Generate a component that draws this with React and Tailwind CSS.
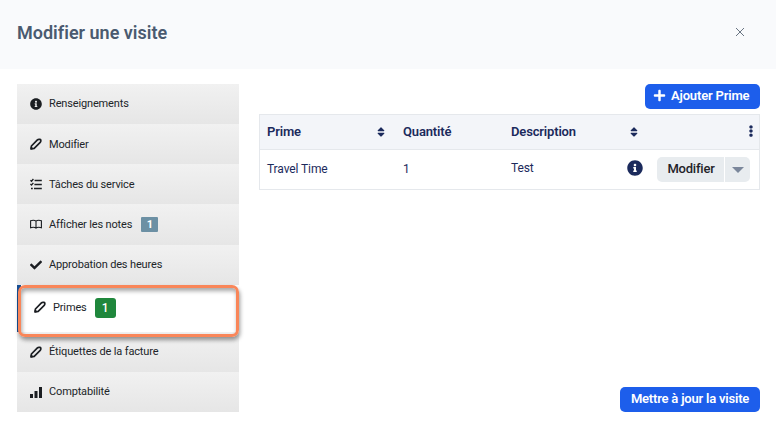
import React from 'react';
import { FaInfoCircle, FaCheck, FaSort, FaPlus, FaEllipsisV } from 'react-icons/fa';

function Pencil() {
  return (
    <svg viewBox="0 0 12 12" className="size-3" fill="none" stroke="#1b1e22">
      <path d="M1 11 1.4 8 7.4 1.9Q8 1.3 9 1.3H10Q10.8 1.4 10.8 2.2V3Q10.8 3.8 10.2 4.4L4.2 10.3Z" strokeWidth="1.7" strokeLinejoin="round" />
      <path d="M1 11 1.2 9 3 10.6Z" fill="#1b1e22" />
    </svg>
  );
}

function Tasks() {
  return (
    <svg viewBox="0 0 12 12" className="size-3" fill="none" stroke="#1b1e22" strokeWidth="1.3">
      <path d="M4.6 2.5H11.8M4.4 6.5H11.8M4 10.5H11.8M0.4 2.2 1.5 3.2 3.4 1M0.4 6 1.5 7 3.4 4.8" />
      <path d="M1 10.5H2.8" strokeWidth="1.5" />
    </svg>
  );
}

function Book() {
  return (
    <svg viewBox="0 0 12 12" className="size-3" fill="none" stroke="#1b1e22" strokeWidth="1.1">
      <path d="M6 3.2Q5 2.3 3.2 2.3 1.5 2.3 .6 2.7V9.7Q1.5 9.3 3.2 9.3 5 9.3 6 10.2 7 9.3 8.8 9.3 10.5 9.3 11.4 9.7V2.7Q10.5 2.3 8.8 2.3 7 2.3 6 3.2V9.9" />
    </svg>
  );
}

function Bars() {
  return (
    <svg viewBox="0 0 12 12" className="size-3" fill="#1b1e22">
      <path d="M0 8H3V12H0ZM4.5 5H7.5V12H4.5ZM9 1H12V12H9Z" />
    </svg>
  );
}

function Item({ icon, label, low = false, tall = false, children }) {
  return (
    <div className={`flex items-center bg-linear-to-b from-[#f1f1f1] to-[#e6e6e6] pl-[13px] ${tall ? 'h-[41px] pb-px' : 'h-10'}`}>
      <span className="flex size-3 items-center justify-center text-[#1b1e22]">{icon}</span>
      <span className={`ml-[7px] ${low ? 'pt-px' : 'pb-px'}`}>{label}</span>
      {children}
    </div>
  );
}

export default function App() {
  return (
    <div className="flex h-[427px] w-[776px] flex-col overflow-hidden bg-white font-['Roboto',sans-serif] text-[#1b2a5c]">
      <header className="flex h-[69px] shrink-0 items-center justify-between bg-[#f9fafc] pr-[31px] pb-[5px] pl-[17px]">
        <h1 className="text-[18px] font-semibold tracking-[0.01px] text-[#4a5a70]">Modifier une visite</h1>
        <svg viewBox="0 0 10 10" className="size-[10px]" fill="none" stroke="#596575" strokeWidth="0.9">
          <path d="M1 1 9 9M9 1 1 9" />
        </svg>
      </header>
      <div className="flex flex-1 pt-[15px] pr-4 pb-[15px] pl-[17px]">
        <nav className="w-[222px] shrink-0 text-[11px] leading-4 tracking-[-0.15px] text-[#212529]">
          <Item icon={<FaInfoCircle className="size-3" />} label="Renseignements" />
          <Item icon={<Pencil />} label="Modifier" low />
          <Item icon={<Tasks />} label="Tâches du service" low />
          <Item icon={<Book />} label="Afficher les notes" low tall>
            <span className="ml-[9px] flex h-[15px] w-[17px] items-center justify-center rounded-[1px] bg-[#6c90a4] pt-px text-[11px] font-bold text-white">1</span>
          </Item>
          <Item icon={<FaCheck className="size-3" />} label="Approbation des heures" />
          <div className="relative flex h-[47px] items-center border-l-4 border-[#174f94] bg-white pb-[3px] pl-[13px]">
            <Pencil />
            <span className="ml-[7px] pt-px">Primes</span>
            <span className="mt-[2px] ml-[8px] flex h-5 w-[21px] items-center justify-center rounded-[3px] bg-[#1f873c] pb-px text-[12px] font-medium text-white">1</span>
            <div className="absolute top-0 right-0 -left-[3px] h-[52px] rounded-[7px] border-3 border-[#f98659] shadow-[1px_3px_4px_rgba(0,0,0,0.4),inset_1px_3px_4px_rgba(0,0,0,0.35)]" />
          </div>
          <Item icon={<Pencil />} label="Étiquettes de la facture" />
          <Item icon={<Bars />} label="Comptabilité" />
        </nav>
        <main className="ml-5 flex flex-1 flex-col items-end">
          <button className="flex h-[25px] w-[115px] items-center rounded-[5px] bg-[#1d5eeb] pb-px pl-[8px] text-[13px] font-semibold tracking-[-0.17px] text-white">
            <FaPlus className="mr-[5px] mb-px size-[13px]" />
            Ajouter Prime
          </button>
          <div className="mt-[5px] w-full border border-[#e5e8ec] text-[13px]">
            <div className="flex h-[35px] items-center border-b border-[#e5e8ec] bg-[#f3f5f9] font-semibold tracking-[-0.16px]">
              <span className="w-[109px] pl-[7px]">Prime</span>
              <FaSort className="w-6 text-[12px]" />
              <span className="ml-[10px] w-[108px]">Quantité</span>
              <span className="w-[111px]">Description</span>
              <FaSort className="w-6 text-[12px]" />
              <FaEllipsisV className="mr-[2px] mb-[3px] ml-auto text-[12px]" />
            </div>
            <div className="flex h-[39px] items-center text-[12px] tracking-[-0.1px]">
              <span className="w-[143px] pb-[2px] pl-[7px]">Travel Time</span>
              <span className="w-[108px] pb-[2px]">1</span>
              <span className="w-[116px] pb-[3px]">Test</span>
              <FaInfoCircle className="mb-[3px] size-4" />
              <button className="ml-[14px] h-[25px] w-[67px] rounded-l-[5px] bg-[#e8ecef] pb-px pl-px text-[13px] font-medium tracking-[-0.22px] text-[#1f2329]">Modifier</button>
              <button className="ml-px flex h-[25px] w-[25px] items-center justify-center rounded-r-[5px] bg-[#e8ecef]">
                <svg viewBox="0 0 12 6" className="h-[6px] w-3" fill="#7b879b"><path d="M0 0H12L6 6Z" /></svg>
              </button>
            </div>
          </div>
          <button className="mt-auto h-[25px] w-[140px] rounded-[5px] bg-[#1d5eeb] pb-[2px] text-[13px] font-semibold tracking-[-0.2px] text-white">Mettre à jour la visite</button>
        </main>
      </div>
    </div>
  );
}
